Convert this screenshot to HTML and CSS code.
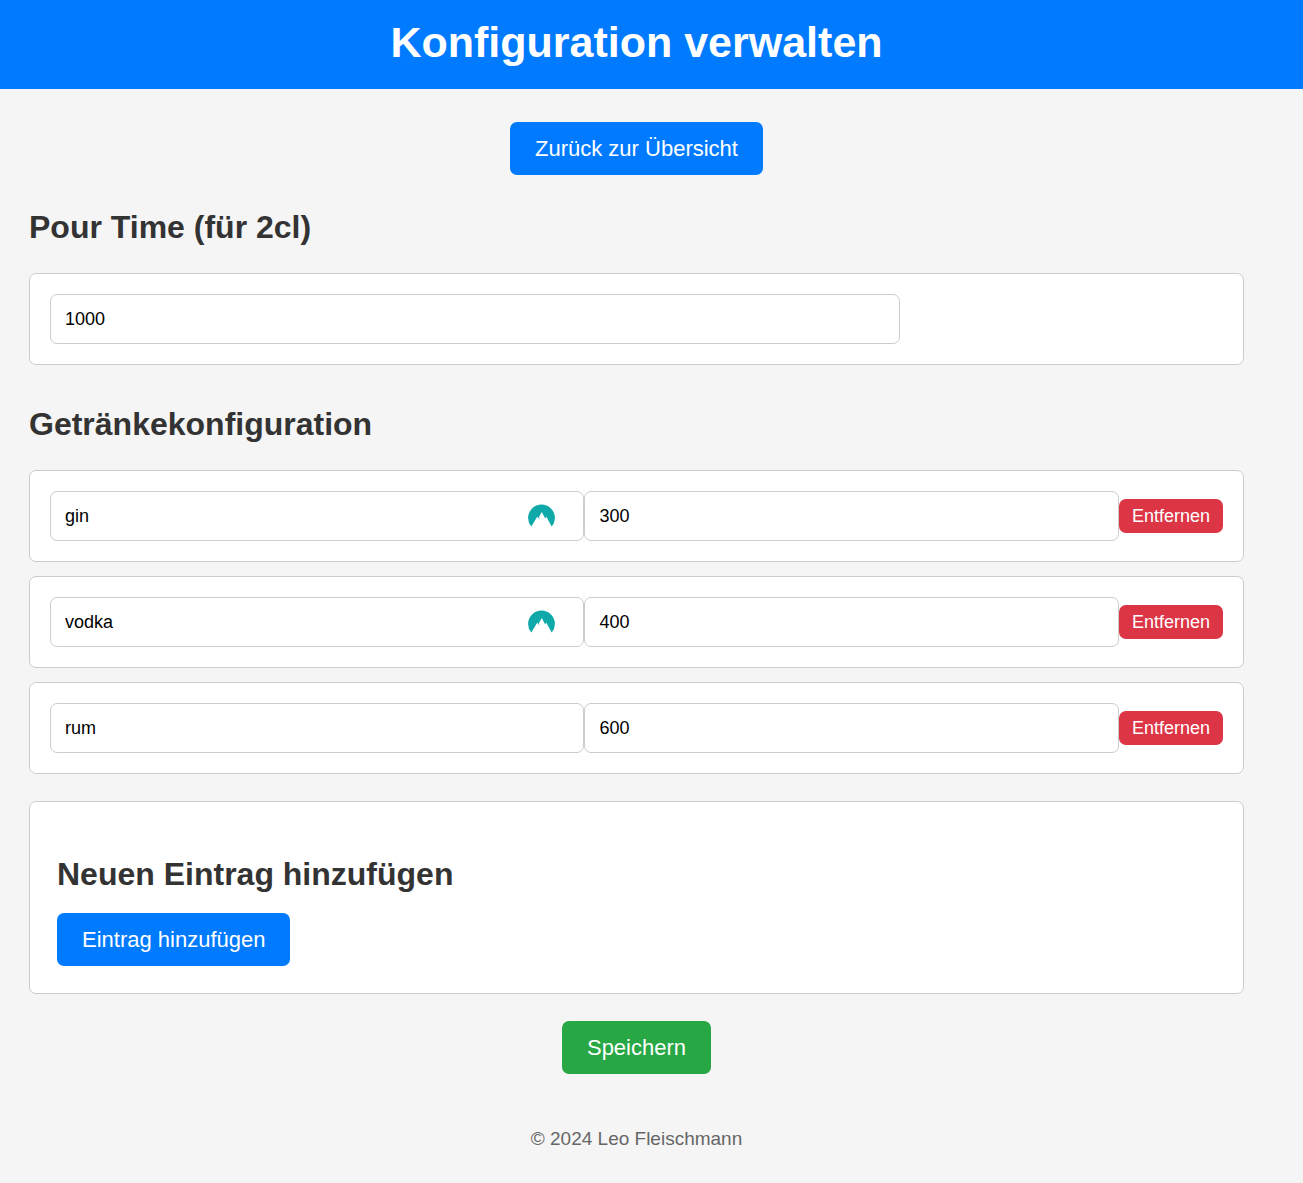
FILE: index.html
```html
<!DOCTYPE html>
<html lang="de">
<head>
<meta charset="utf-8">
<meta name="viewport" content="width=device-width, initial-scale=1">
<title>Konfiguration verwalten</title>
<link rel="stylesheet" href="styles.css">
</head>
<body>
<header class="header">
  <h1>Konfiguration verwalten</h1>
</header>
<main class="main">
  <div class="actions">
    <button class="btn" type="button">Zurück zur Übersicht</button>
  </div>
  <form class="form">
    <h2 class="section-title" id="pour-time">Pour Time (für 2cl)</h2>
    <div class="card row">
      <input class="field field-time" type="text" value="1000" aria-labelledby="pour-time">
    </div>

    <h2 class="section-title section-title-next">Getränkekonfiguration</h2>
    <div class="drinks">
      <div class="card row drink">
        <div class="field-wrap">
          <input class="field" type="text" value="gin" aria-label="Getränk 1">
          <svg class="badge" viewBox="0 0 27 24" aria-hidden="true"><path fill="#0fa9a9" d="M3.3 22.6A13.4 13.4 0 1 1 23.7 22.6L18.2 12.6L17.2 14.6L13.8 8L10.9 13.2L11.8 15.6L9.2 12.8Z"/></svg>
        </div>
        <input class="field" type="text" value="300" aria-label="Menge 1">
        <button class="btn-remove" type="button">Entfernen</button>
      </div>
      <div class="card row drink">
        <div class="field-wrap">
          <input class="field" type="text" value="vodka" aria-label="Getränk 2">
          <svg class="badge" viewBox="0 0 27 24" aria-hidden="true"><path fill="#0fa9a9" d="M3.3 22.6A13.4 13.4 0 1 1 23.7 22.6L18.2 12.6L17.2 14.6L13.8 8L10.9 13.2L11.8 15.6L9.2 12.8Z"/></svg>
        </div>
        <input class="field" type="text" value="400" aria-label="Menge 2">
        <button class="btn-remove" type="button">Entfernen</button>
      </div>
      <div class="card row drink">
        <div class="field-wrap">
          <input class="field" type="text" value="rum" aria-label="Getränk 3">
        </div>
        <input class="field" type="text" value="600" aria-label="Menge 3">
        <button class="btn-remove" type="button">Entfernen</button>
      </div>
    </div>

    <section class="card new-entry">
      <h2>Neuen Eintrag hinzufügen</h2>
      <button class="btn" type="button">Eintrag hinzufügen</button>
    </section>

    <div class="actions">
      <button class="btn btn-save" type="button">Speichern</button>
    </div>
  </form>
</main>
<footer class="footer">© 2024 Leo Fleischmann</footer>
</body>
</html>
```

FILE: styles.css
```css
* {
  box-sizing: border-box;
}

body {
  margin: 0;
  background: #f5f5f5;
  color: #333;
  font-family: Arial, "Liberation Sans", sans-serif;
}

h1,
h2 {
  margin: 0;
}

.header {
  padding: 18px 59px 22px 29px;
  background: #007bff;
  color: #fff;
  text-align: center;
}

.header h1 {
  font-size: 43px;
  line-height: 49px;
}

.main {
  padding: 33px 59px 0 29px;
}

.actions {
  display: flex;
  justify-content: center;
}

h2 {
  font-size: 32px;
  line-height: 36px;
}

.section-title {
  margin: 34px 0 28px;
}

.section-title-next {
  margin-top: 41px;
}

.card {
  background: #fff;
  border: 1px solid #ccc;
  border-radius: 7px;
}

.row {
  display: flex;
  align-items: center;
  padding: 20px;
}

.drinks {
  display: grid;
  gap: 14px;
}

.drink {
  display: grid;
  grid-template-columns: 1fr 1fr auto;
}

.field {
  min-width: 0;
  width: 100%;
  height: 50px;
  padding: 0 14px;
  border: 1px solid #ccc;
  border-radius: 7px;
  background: #fff;
  color: #000;
  font-family: inherit;
  font-size: 18px;
}

.field-time {
  max-width: 850px;
}

.field-wrap {
  position: relative;
  display: flex;
  min-width: 0;
}

.badge {
  position: absolute;
  top: 13px;
  right: 29px;
  width: 27px;
  height: 24px;
}

.btn,
.btn-remove {
  border: 0;
  border-radius: 7px;
  background: #007bff;
  color: #fff;
  font-family: inherit;
  cursor: pointer;
}

.btn {
  padding: 14px 25px;
  font-size: 22px;
  line-height: 25px;
}

.btn-save {
  background: #28a745;
}

.btn-remove {
  padding: 7px 13px;
  background: #dc3545;
  font-size: 18px;
  line-height: 20px;
}

.new-entry {
  display: flex;
  flex-direction: column;
  align-items: flex-start;
  gap: 21px;
  margin: 27px 0;
  padding: 54px 27px 27px;
}

.footer {
  padding: 54px 59px 34px 29px;
  color: #666;
  font-size: 19px;
  line-height: 21px;
  text-align: center;
}
```
